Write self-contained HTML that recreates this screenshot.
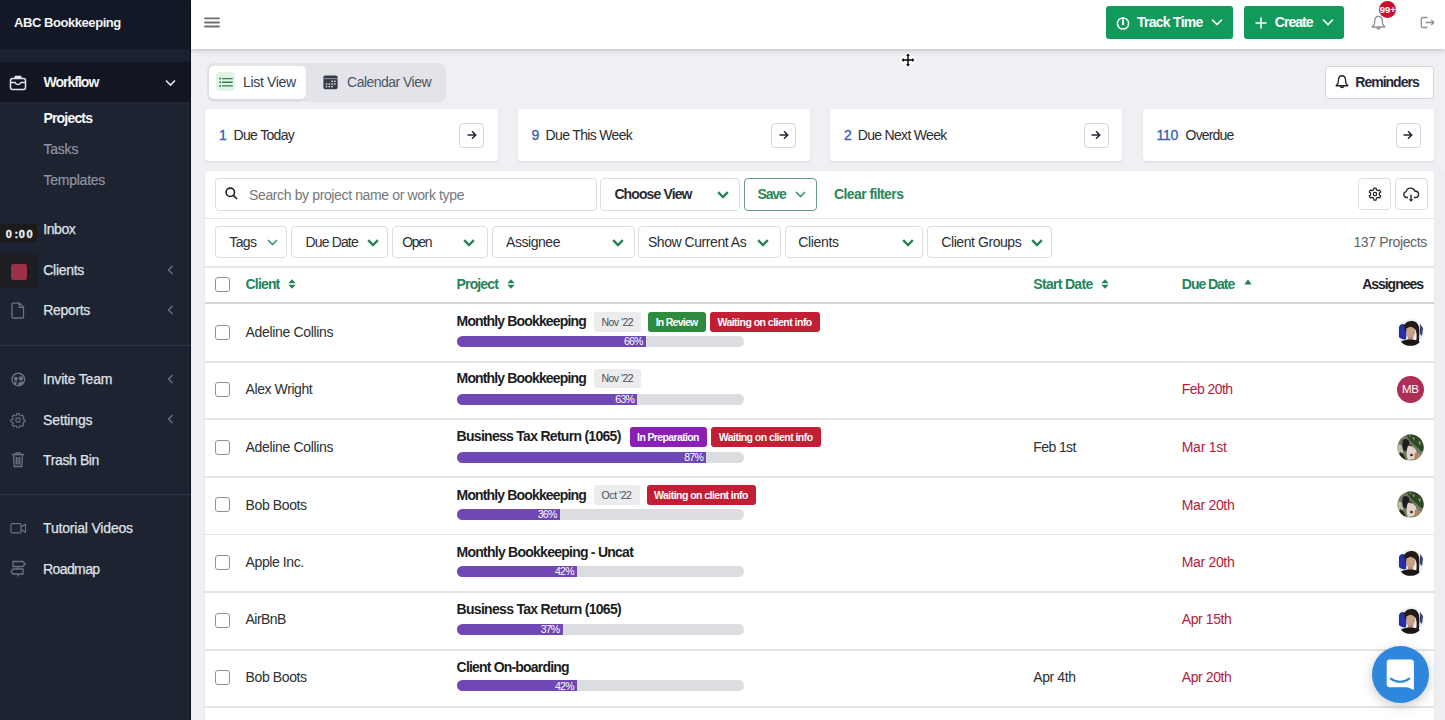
<!DOCTYPE html>
<html><head><meta charset="utf-8"><style>
html,body{margin:0;padding:0;width:1445px;height:720px;overflow:hidden;background:#eef0f4}
body{position:relative;font-family:"Liberation Sans",sans-serif}
.abs{position:absolute}
.t{position:absolute;white-space:nowrap;line-height:1}
svg{display:block}
</style></head><body>
<div class="abs" style="left:0;top:0;width:191px;height:720px;background:#1e2331"></div>
<div class="abs" style="left:0;top:0;width:191px;height:49px;background:#121826"></div>
<div class="abs" style="left:0;top:49px;width:191px;height:13px;background:#1b2130"></div>
<div class="abs" style="left:0;top:62.3px;width:191px;height:40px;background:#121622"></div>
<div class="abs" style="left:190px;top:0;width:1px;height:720px;background:#0b0e15"></div>
<div class="abs" style="left:0;top:345px;width:191px;height:1px;background:#30364a"></div>
<div class="abs" style="left:0;top:494px;width:191px;height:1px;background:#30364a"></div>
<div class="t" style="left:14.00px;top:15.60px;font-size:13px;font-weight:700;color:#f3f4f6;letter-spacing:-0.438px;">ABC Bookkeeping</div>
<div class="t" style="left:43.40px;top:75.35px;font-size:14px;font-weight:700;color:#f3f4f6;letter-spacing:-0.970px;">Workflow</div>
<div class="t" style="left:43.40px;top:110.75px;font-size:14px;font-weight:700;color:#f9fafb;letter-spacing:-0.804px;">Projects</div>
<div class="t" style="left:43.40px;top:141.55px;font-size:14px;font-weight:400;color:#9196a1;letter-spacing:-0.193px;-webkit-text-stroke:0.2px #9196a1;">Tasks</div>
<div class="t" style="left:43.40px;top:172.65px;font-size:14px;font-weight:400;color:#9196a1;letter-spacing:-0.230px;-webkit-text-stroke:0.2px #9196a1;">Templates</div>
<div class="t" style="left:43.30px;top:221.85px;font-size:14px;font-weight:400;color:#dfe2e7;letter-spacing:-0.433px;-webkit-text-stroke:0.25px #dfe2e7;">Inbox</div>
<div class="t" style="left:43.30px;top:262.85px;font-size:14px;font-weight:400;color:#dfe2e7;letter-spacing:-0.295px;-webkit-text-stroke:0.25px #dfe2e7;">Clients</div>
<div class="t" style="left:43.30px;top:303.15px;font-size:14px;font-weight:400;color:#dfe2e7;letter-spacing:-0.333px;-webkit-text-stroke:0.25px #dfe2e7;">Reports</div>
<div class="t" style="left:43.10px;top:372.45px;font-size:14px;font-weight:400;color:#dfe2e7;letter-spacing:-0.203px;-webkit-text-stroke:0.25px #dfe2e7;">Invite Team</div>
<div class="t" style="left:43.10px;top:412.65px;font-size:14px;font-weight:400;color:#dfe2e7;letter-spacing:-0.159px;-webkit-text-stroke:0.25px #dfe2e7;">Settings</div>
<div class="t" style="left:43.10px;top:453.15px;font-size:14px;font-weight:400;color:#dfe2e7;letter-spacing:-0.395px;-webkit-text-stroke:0.25px #dfe2e7;">Trash Bin</div>
<div class="t" style="left:43.10px;top:521.15px;font-size:14px;font-weight:400;color:#dfe2e7;letter-spacing:-0.186px;-webkit-text-stroke:0.25px #dfe2e7;">Tutorial Videos</div>
<div class="t" style="left:43.10px;top:561.75px;font-size:14px;font-weight:400;color:#dfe2e7;letter-spacing:-0.615px;-webkit-text-stroke:0.25px #dfe2e7;">Roadmap</div>
<svg class="abs" style="left:9px;top:75px" width="18" height="16" viewBox="0 0 18 16"><g fill="none" stroke="#e5e7eb" stroke-width="1.5"><rect x="1.5" y="3.5" width="15" height="11" rx="2"/><path d="M1.5 7.5h4.5c.6 1.5 1.5 2 3 2s2.4-.5 3-2h4.5"/></g><rect x="5.5" y="0.8" width="7" height="2.7" rx="1" fill="#e5e7eb"/></svg>
<svg class="abs" style="left:165px;top:79px" width="11" height="8" viewBox="0 0 11 8"><path d="M1 1.5l4.5 4.5 4.5-4.5" fill="none" stroke="#e5e7eb" stroke-width="1.6"/></svg>
<svg class="abs" style="left:167px;top:265px" width="7" height="10" viewBox="0 0 7 10"><path d="M5.5 1L1.5 5l4 4" fill="none" stroke="#6b7280" stroke-width="1.4"/></svg>
<svg class="abs" style="left:167px;top:305px" width="7" height="10" viewBox="0 0 7 10"><path d="M5.5 1L1.5 5l4 4" fill="none" stroke="#6b7280" stroke-width="1.4"/></svg>
<svg class="abs" style="left:167px;top:374px" width="7" height="10" viewBox="0 0 7 10"><path d="M5.5 1L1.5 5l4 4" fill="none" stroke="#6b7280" stroke-width="1.4"/></svg>
<svg class="abs" style="left:167px;top:414px" width="7" height="10" viewBox="0 0 7 10"><path d="M5.5 1L1.5 5l4 4" fill="none" stroke="#6b7280" stroke-width="1.4"/></svg>
<div class="abs" style="left:0;top:224px;width:37px;height:17.5px;background:#1b1b1c"></div>
<div class="t" style="left:5.80px;top:228.99px;font-size:11px;font-weight:700;color:#f5f5f5;letter-spacing:0.000px;-webkit-text-stroke:0.3px #f5f5f5;">0</div>
<div class="t" style="left:14.50px;top:228.99px;font-size:11px;font-weight:700;color:#f5f5f5;letter-spacing:0.000px;-webkit-text-stroke:0.3px #f5f5f5;">:</div>
<div class="t" style="left:18.80px;top:228.99px;font-size:11px;font-weight:700;color:#f5f5f5;letter-spacing:1.590px;-webkit-text-stroke:0.3px #f5f5f5;">00</div>
<div class="abs" style="left:0;top:253px;width:38px;height:35px;background:#1d1e22"></div>
<div class="abs" style="left:11px;top:264px;width:16px;height:16px;background:#9b3148;border-radius:2px"></div>
<svg class="abs" style="left:11px;top:302px" width="14" height="17" viewBox="0 0 14 17"><path d="M2 1.2h6.5l4 4v9.6a1.2 1.2 0 0 1-1.2 1.2H2.2A1.2 1.2 0 0 1 1 14.8V2.4A1.2 1.2 0 0 1 2.2 1.2z M8.3 1.2v4.2h4.2" fill="none" stroke="#6b7280" stroke-width="1.3"/></svg>
<svg class="abs" style="left:10.5px;top:371.5px" width="15" height="15" viewBox="0 0 15 15"><circle cx="7.3" cy="7.5" r="6.3" fill="none" stroke="#6b7280" stroke-width="1.4"/><circle cx="4.8" cy="6.8" r="2" fill="#6b7280"/><circle cx="9.9" cy="6.4" r="2.2" fill="#6b7280"/><path d="M2.5 11.5c.8-1.5 2-2.2 3.5-2.4l-1 3.6z M7 11.8c1-1.6 2.8-2.4 4.6-2.2l.9 1.4c-1 1.6-2.8 2.6-5 2.6z" fill="#6b7280"/></svg>
<svg class="abs" style="left:10px;top:411.5px" width="16" height="16" viewBox="0 0 24 24"><path fill="none" stroke="#6b7280" stroke-width="1.7" d="M10.3 2.5h3.4l.5 2.6 1.9.8 2.2-1.5 2.4 2.4-1.5 2.2.8 1.9 2.6.5v3.4l-2.6.5-.8 1.9 1.5 2.2-2.4 2.4-2.2-1.5-1.9.8-.5 2.6h-3.4l-.5-2.6-1.9-.8-2.2 1.5-2.4-2.4 1.5-2.2-.8-1.9-2.6-.5v-3.4l2.6-.5.8-1.9-1.5-2.2 2.4-2.4 2.2 1.5 1.9-.8z"/><circle cx="12" cy="12" r="3.2" fill="none" stroke="#6b7280" stroke-width="1.7"/></svg>
<svg class="abs" style="left:11px;top:451px" width="14" height="17" viewBox="0 0 14 17"><path d="M1 3.5h12M5 3.5V1.8h4v1.7M2.5 3.5l.8 12h7.4l.8-12M5.3 6v7.5M7 6v7.5M8.7 6v7.5" fill="none" stroke="#6b7280" stroke-width="1.3"/></svg>
<svg class="abs" style="left:9.5px;top:522px" width="16.5" height="12.5" viewBox="0 0 18 13"><rect x="1" y="1.5" width="11" height="10" rx="1.5" fill="none" stroke="#6b7280" stroke-width="1.3"/><path d="M12 5l5-3v9l-5-3" fill="none" stroke="#6b7280" stroke-width="1.3"/></svg>
<svg class="abs" style="left:10px;top:560px" width="16" height="17" viewBox="0 0 16 17"><path d="M3 1.5h10l2 2.5-2 2.5H3z M13 9H3l-2 2.5 2 2.5h10z M8 6.5V9 M8 14v2.5" fill="none" stroke="#6b7280" stroke-width="1.3"/></svg>
<div class="abs" style="left:191px;top:0;width:1254px;height:720px;background:#eef0f4"></div>
<div class="abs" style="left:191px;top:0;width:1254px;height:49px;background:#ffffff;box-shadow:0 1.5px 5px rgba(0,0,0,0.20)"></div>
<svg class="abs" style="left:203px;top:15px" width="18" height="15" viewBox="0 0 18 15"><path d="M2 3.4h14M2 7.5h14M2 11.5h14" stroke="#6f7174" stroke-width="1.8" stroke-linecap="round"/></svg>
<div class="abs" style="left:1106px;top:6px;width:127px;height:33px;background:#129a5d;border-radius:3px"></div>
<svg class="abs" style="left:1116px;top:16px" width="14" height="14" viewBox="0 0 14 14"><circle cx="7" cy="7.5" r="5.6" fill="none" stroke="#fff" stroke-width="1.5"/><path d="M7 1.2v3" stroke="#fff" stroke-width="1.2"/><path d="M6.4 3.5h1.2l.6 4.6a1.2 1.2 0 0 1-2.4 0z" fill="#fff"/></svg>
<div class="t" style="left:1136.90px;top:15.15px;font-size:14px;font-weight:700;color:#ffffff;letter-spacing:-0.719px;">Track Time</div>
<svg class="abs" style="left:1211px;top:18px" width="12" height="8" viewBox="0 0 12 8"><path d="M1 1.5l5 5 5-5" fill="none" stroke="#fff" stroke-width="1.6"/></svg>
<div class="abs" style="left:1244px;top:6px;width:100px;height:33px;background:#129a5d;border-radius:3px"></div>
<svg class="abs" style="left:1255px;top:17px" width="12" height="12" viewBox="0 0 12 12"><path d="M6 0.5v11M0.5 6h11" stroke="#fff" stroke-width="1.6"/></svg>
<div class="t" style="left:1274.80px;top:15.15px;font-size:14px;font-weight:700;color:#ffffff;letter-spacing:-0.982px;">Create</div>
<svg class="abs" style="left:1322px;top:18px" width="12" height="8" viewBox="0 0 12 8"><path d="M1 1.5l5 5 5-5" fill="none" stroke="#fff" stroke-width="1.6"/></svg>
<svg class="abs" style="left:1370.5px;top:15px" width="15" height="16" viewBox="0 0 15 16"><path d="M7.5 1.3c-2.3 0-3.6 1.9-3.8 4.3l-.3 3.5L1.2 12h12.6l-2.2-2.9-.3-3.5c-.2-2.4-1.5-4.3-3.8-4.3z M5.8 12.3a1.7 1.7 0 0 0 3.4 0" fill="none" stroke="#8b9096" stroke-width="1.3" stroke-linejoin="round"/></svg>
<div class="abs" style="left:1378.9px;top:0.9px;width:17px;height:17px;background:#c8102e;border-radius:50%"></div>
<div class="t" style="left:1379.70px;top:4.56px;font-size:9.5px;font-weight:700;color:#ffffff;letter-spacing:0.049px;">99+</div>
<svg class="abs" style="left:1420px;top:16px" width="15" height="13" viewBox="0 0 15 13"><path d="M7.5 1.5H2.6A1.3 1.3 0 0 0 1.3 2.8v7.4a1.3 1.3 0 0 0 1.3 1.3h4.9 M5.5 6.5h8 M11.3 4l2.5 2.5-2.5 2.5" fill="none" stroke="#8b9096" stroke-width="1.3"/></svg>
<svg class="abs" style="left:900px;top:52px" width="16" height="16" viewBox="0 0 16 16"><path d="M8 0.5l3 3H9v3.5h3.5V5l3 3-3 3V9H9v3.5h2l-3 3-3-3h2V9H3.5v2l-3-3 3-3v2H7V3.5H5z" fill="#fff" stroke="#fff" stroke-width="1.5"/><path d="M8 1.5l2 2.2H8.7v3.6h3.6V6L14.5 8l-2.2 2V8.7H8.7v3.6H10L8 14.5l-2-2.2h1.3V8.7H3.7V10L1.5 8l2.2-2v1.3h3.6V3.7H6z" fill="#000"/></svg>
<div class="abs" style="left:207.3px;top:62.6px;width:238.7px;height:39.4px;background:#e2e4e9;border-radius:7px"></div>
<div class="abs" style="left:209.3px;top:66px;width:96.7px;height:32.6px;background:#ffffff;border-radius:5px;box-shadow:0 1px 2px rgba(0,0,0,0.08)"></div>
<div class="abs" style="left:216.3px;top:72.3px;width:19px;height:19px;background:#e2f4e7;border-radius:4px"></div>
<svg class="abs" style="left:219px;top:76.5px" width="14" height="11" viewBox="0 0 14 11"><g fill="#3a7d52"><circle cx="1.1" cy="1.6" r="1"/><circle cx="1.1" cy="5.2" r="1"/><circle cx="1.1" cy="8.9" r="1"/><rect x="3" y="0.9" width="10.8" height="1.4" rx=".5"/><rect x="3" y="4.5" width="10.8" height="1.4" rx=".5"/><rect x="3" y="8.2" width="10.8" height="1.4" rx=".5"/></g></svg>
<div class="t" style="left:243.00px;top:74.75px;font-size:14px;font-weight:400;color:#374151;letter-spacing:-0.324px;">List View</div>
<svg class="abs" style="left:322.5px;top:74.8px" width="15" height="15" viewBox="0 0 15 15"><rect x="0.4" y="0.4" width="14.2" height="13.9" rx="1.8" fill="#343b47"/><rect x="0.4" y="3.3" width="14.2" height="0.8" fill="#a9adb5"/><g fill="#e2e4e9"><rect x="8.3" y="5.6" width="1.6" height="1.4"/><rect x="11" y="5.6" width="1.6" height="1.4"/><rect x="2.7" y="8.3" width="1.6" height="1.4"/><rect x="5.5" y="8.3" width="1.6" height="1.4"/><rect x="8.3" y="8.3" width="1.6" height="1.4"/><rect x="11" y="8.3" width="1.6" height="1.4"/><rect x="2.7" y="10.9" width="1.6" height="1.4"/><rect x="5.5" y="10.9" width="1.6" height="1.4"/><rect x="8.3" y="10.9" width="1.6" height="1.4"/></g></svg>
<div class="t" style="left:347.10px;top:75.15px;font-size:14px;font-weight:400;color:#4b5563;letter-spacing:-0.530px;">Calendar View</div>
<div class="abs" style="left:1325px;top:66px;width:109.4px;height:32.5px;background:#fff;border:1px solid #d1d5db;border-radius:4px;box-sizing:border-box"></div>
<svg class="abs" style="left:1334.5px;top:74px" width="14" height="16" viewBox="0 0 15 16"><path d="M7.5 1.3c-2.3 0-3.6 1.9-3.8 4.3l-.3 3.5L1.2 12h12.6l-2.2-2.9-.3-3.5c-.2-2.4-1.5-4.3-3.8-4.3z M5.8 12.3a1.7 1.7 0 0 0 3.4 0" fill="none" stroke="#1f2328" stroke-width="1.4" stroke-linejoin="round"/></svg>
<div class="t" style="left:1355.30px;top:75.25px;font-size:14px;font-weight:700;color:#1f2937;letter-spacing:-0.998px;">Reminders</div>
<div class="abs" style="left:205px;top:109px;width:292.5px;height:51.5px;background:#fff;border-radius:4px;box-shadow:0 1px 2px rgba(0,0,0,0.10)"></div>
<div class="abs" style="left:459.0px;top:122.5px;width:25px;height:25px;border:1.3px solid #d4d6da;border-radius:4px;box-sizing:border-box;background:#fff"></div>
<svg class="abs" style="left:466.5px;top:130px" width="10" height="10" viewBox="0 0 10 10"><path d="M0.5 5h8.2M5 1.3L8.7 5 5 8.7" fill="none" stroke="#1f2937" stroke-width="1.5"/></svg>
<div class="abs" style="left:517.5px;top:109px;width:292.0px;height:51.5px;background:#fff;border-radius:4px;box-shadow:0 1px 2px rgba(0,0,0,0.10)"></div>
<div class="abs" style="left:771.0px;top:122.5px;width:25px;height:25px;border:1.3px solid #d4d6da;border-radius:4px;box-sizing:border-box;background:#fff"></div>
<svg class="abs" style="left:778.5px;top:130px" width="10" height="10" viewBox="0 0 10 10"><path d="M0.5 5h8.2M5 1.3L8.7 5 5 8.7" fill="none" stroke="#1f2937" stroke-width="1.5"/></svg>
<div class="abs" style="left:830px;top:109px;width:292px;height:51.5px;background:#fff;border-radius:4px;box-shadow:0 1px 2px rgba(0,0,0,0.10)"></div>
<div class="abs" style="left:1083.5px;top:122.5px;width:25px;height:25px;border:1.3px solid #d4d6da;border-radius:4px;box-sizing:border-box;background:#fff"></div>
<svg class="abs" style="left:1091px;top:130px" width="10" height="10" viewBox="0 0 10 10"><path d="M0.5 5h8.2M5 1.3L8.7 5 5 8.7" fill="none" stroke="#1f2937" stroke-width="1.5"/></svg>
<div class="abs" style="left:1143px;top:109px;width:291px;height:51.5px;background:#fff;border-radius:4px;box-shadow:0 1px 2px rgba(0,0,0,0.10)"></div>
<div class="abs" style="left:1395.5px;top:122.5px;width:25px;height:25px;border:1.3px solid #d4d6da;border-radius:4px;box-sizing:border-box;background:#fff"></div>
<svg class="abs" style="left:1403px;top:130px" width="10" height="10" viewBox="0 0 10 10"><path d="M0.5 5h8.2M5 1.3L8.7 5 5 8.7" fill="none" stroke="#1f2937" stroke-width="1.5"/></svg>
<div class="t" style="left:219.00px;top:127.55px;font-size:14px;font-weight:400;color:#3b62ad;letter-spacing:0.000px;-webkit-text-stroke:0.35px #3b62ad;">1</div>
<div class="t" style="left:233.60px;top:127.55px;font-size:14px;font-weight:400;color:#2a2c30;letter-spacing:-0.689px;">Due Today</div>
<div class="t" style="left:531.60px;top:127.55px;font-size:14px;font-weight:400;color:#3b62ad;letter-spacing:0.000px;-webkit-text-stroke:0.35px #3b62ad;">9</div>
<div class="t" style="left:545.60px;top:127.55px;font-size:14px;font-weight:400;color:#2a2c30;letter-spacing:-0.664px;">Due This Week</div>
<div class="t" style="left:844.00px;top:127.55px;font-size:14px;font-weight:400;color:#3b62ad;letter-spacing:0.000px;-webkit-text-stroke:0.35px #3b62ad;">2</div>
<div class="t" style="left:857.80px;top:127.55px;font-size:14px;font-weight:400;color:#2a2c30;letter-spacing:-0.697px;">Due Next Week</div>
<div class="t" style="left:1156.60px;top:127.55px;font-size:14px;font-weight:400;color:#3b62ad;letter-spacing:-0.265px;-webkit-text-stroke:0.35px #3b62ad;">110</div>
<div class="t" style="left:1185.60px;top:127.55px;font-size:14px;font-weight:400;color:#2a2c30;letter-spacing:-0.848px;">Overdue</div>
<div class="abs" style="left:205px;top:171px;width:1229px;height:560px;background:#fff;border-radius:4px;box-shadow:0 1px 2px rgba(0,0,0,0.08)"></div>
<div class="abs" style="left:205px;top:218px;width:1229px;height:1px;background:#e3e5e8"></div>
<div class="abs" style="left:205px;top:266px;width:1229px;height:1.5px;background:#e3e5e8"></div>
<div class="abs" style="left:205px;top:301.5px;width:1229px;height:2px;background:#d5d6d9"></div>
<div class="abs" style="left:215.3px;top:178px;width:381.8px;height:32.69999999999999px;border:1.2px solid #dcdee2;border-radius:4px;box-sizing:border-box;background:#fff;"></div>
<svg class="abs" style="left:225px;top:187px" width="13" height="13" viewBox="0 0 13 13"><circle cx="5.3" cy="5.3" r="4.2" fill="none" stroke="#1f2328" stroke-width="1.6"/><path d="M8.4 8.4l3.6 3.6" stroke="#1f2328" stroke-width="1.7"/></svg>
<div class="t" style="left:249.00px;top:187.75px;font-size:14px;font-weight:400;color:#75777a;letter-spacing:-0.370px;">Search by project name or work type</div>
<div class="abs" style="left:600.4px;top:178px;width:139.20000000000005px;height:32.69999999999999px;border:1.2px solid #dcdee2;border-radius:4px;box-sizing:border-box;background:#fff;"></div>
<div class="t" style="left:614.40px;top:187.15px;font-size:14px;font-weight:700;color:#2a2c30;letter-spacing:-0.884px;">Choose View</div>
<svg class="abs" style="left:717.3px;top:190.5px" width="12" height="8" viewBox="0 0 12 8"><path d="M1.2 1.2l4.8 4.8 4.8-4.8" fill="none" stroke="#268256" stroke-width="2.4"/></svg>
<div class="abs" style="left:743.5px;top:178px;width:73.2px;height:32.7px;border:1.3px solid #6b9b80;border-radius:4px;box-sizing:border-box"></div>
<div class="t" style="left:757.50px;top:187.15px;font-size:14px;font-weight:700;color:#2a8757;letter-spacing:-1.130px;">Save</div>
<svg class="abs" style="left:795px;top:191px" width="11" height="7" viewBox="0 0 11 7"><path d="M1 1l4.5 4.5L10 1" fill="none" stroke="#2a8757" stroke-width="1.4"/></svg>
<div class="t" style="left:834.00px;top:187.15px;font-size:14px;font-weight:700;color:#2a8757;letter-spacing:-0.589px;">Clear filters</div>
<div class="abs" style="left:1358.3px;top:177.8px;width:32.799999999999955px;height:32.69999999999999px;border:1.2px solid #dcdee2;border-radius:4px;box-sizing:border-box;background:#fff;"></div>
<svg class="abs" style="left:1367.8px;top:187.4px" width="14" height="14" viewBox="0 0 14 14"><path d="M11.41 7.91 L12.74 9.05 L11.65 10.95 L9.99 10.36 L8.42 11.27 L8.09 13.00 L5.91 13.00 L5.58 11.27 L4.01 10.36 L2.35 10.95 L1.26 9.05 L2.59 7.91 L2.59 6.09 L1.26 4.95 L2.35 3.05 L4.01 3.64 L5.58 2.73 L5.91 1.00 L8.09 1.00 L8.42 2.73 L9.99 3.64 L11.65 3.05 L12.74 4.95 L11.41 6.09Z" fill="none" stroke="#1f2328" stroke-width="1.25" stroke-linejoin="round"/><circle cx="7" cy="7" r="1.7" fill="none" stroke="#1f2328" stroke-width="1.2"/></svg>
<div class="abs" style="left:1394.5px;top:178px;width:33.09999999999991px;height:32.400000000000006px;border:1.2px solid #dcdee2;border-radius:4px;box-sizing:border-box;background:#fff;"></div>
<svg class="abs" style="left:1402px;top:187px" width="18" height="16" viewBox="0 0 18 16"><path d="M6 10.5H4.3A3 3 0 0 1 4.2 4.6 4.6 4.6 0 0 1 13 4.3a3.1 3.1 0 0 1 .8 6.2H12" fill="none" stroke="#1f2328" stroke-width="1.3" stroke-linejoin="round"/><path d="M9 7.5v6.3" stroke="#1f2328" stroke-width="1.3"/><path d="M6.8 12.2L9 14.8l2.2-2.6z" fill="#1f2328"/></svg>
<div class="abs" style="left:215.3px;top:225.8px;width:72.0px;height:32.599999999999966px;border:1.2px solid #dcdee2;border-radius:4px;box-sizing:border-box;background:#fff;"></div>
<div class="t" style="left:229.30px;top:235.15px;font-size:14px;font-weight:400;color:#2b2f33;letter-spacing:-0.613px;">Tags</div>
<svg class="abs" style="left:266.5px;top:239px" width="11" height="7" viewBox="0 0 11 7"><path d="M1 1l4.5 4.5L10 1" fill="none" stroke="#2a8c5a" stroke-width="1.4"/></svg>
<div class="abs" style="left:291.2px;top:225.8px;width:97.30000000000001px;height:32.599999999999966px;border:1.2px solid #dcdee2;border-radius:4px;box-sizing:border-box;background:#fff;"></div>
<div class="t" style="left:305.50px;top:235.15px;font-size:14px;font-weight:400;color:#2b2f33;letter-spacing:-0.850px;">Due Date</div>
<svg class="abs" style="left:367px;top:238.5px" width="12" height="8" viewBox="0 0 12 8"><path d="M1.2 1.2l4.8 4.8 4.8-4.8" fill="none" stroke="#268256" stroke-width="2.4"/></svg>
<div class="abs" style="left:392.4px;top:225.8px;width:95.20000000000005px;height:32.599999999999966px;border:1.2px solid #dcdee2;border-radius:4px;box-sizing:border-box;background:#fff;"></div>
<div class="t" style="left:402.20px;top:235.15px;font-size:14px;font-weight:400;color:#2b2f33;letter-spacing:-1.277px;">Open</div>
<svg class="abs" style="left:463.3px;top:238.5px" width="12" height="8" viewBox="0 0 12 8"><path d="M1.2 1.2l4.8 4.8 4.8-4.8" fill="none" stroke="#268256" stroke-width="2.4"/></svg>
<div class="abs" style="left:492px;top:225.8px;width:142.60000000000002px;height:32.599999999999966px;border:1.2px solid #dcdee2;border-radius:4px;box-sizing:border-box;background:#fff;"></div>
<div class="t" style="left:506.00px;top:235.15px;font-size:14px;font-weight:400;color:#2b2f33;letter-spacing:-0.444px;">Assignee</div>
<svg class="abs" style="left:612px;top:238.5px" width="12" height="8" viewBox="0 0 12 8"><path d="M1.2 1.2l4.8 4.8 4.8-4.8" fill="none" stroke="#268256" stroke-width="2.4"/></svg>
<div class="abs" style="left:638px;top:225.8px;width:143px;height:32.599999999999966px;border:1.2px solid #dcdee2;border-radius:4px;box-sizing:border-box;background:#fff;"></div>
<div class="t" style="left:647.90px;top:235.15px;font-size:14px;font-weight:400;color:#2b2f33;letter-spacing:-0.441px;">Show Current As</div>
<svg class="abs" style="left:757px;top:238.5px" width="12" height="8" viewBox="0 0 12 8"><path d="M1.2 1.2l4.8 4.8 4.8-4.8" fill="none" stroke="#268256" stroke-width="2.4"/></svg>
<div class="abs" style="left:784.5px;top:225.8px;width:138.89999999999998px;height:32.599999999999966px;border:1.2px solid #dcdee2;border-radius:4px;box-sizing:border-box;background:#fff;"></div>
<div class="t" style="left:798.20px;top:235.15px;font-size:14px;font-weight:400;color:#2b2f33;letter-spacing:-0.328px;">Clients</div>
<svg class="abs" style="left:902px;top:238.5px" width="12" height="8" viewBox="0 0 12 8"><path d="M1.2 1.2l4.8 4.8 4.8-4.8" fill="none" stroke="#268256" stroke-width="2.4"/></svg>
<div class="abs" style="left:927.3px;top:225.8px;width:124.70000000000005px;height:32.599999999999966px;border:1.2px solid #dcdee2;border-radius:4px;box-sizing:border-box;background:#fff;"></div>
<div class="t" style="left:941.30px;top:235.15px;font-size:14px;font-weight:400;color:#2b2f33;letter-spacing:-0.434px;">Client Groups</div>
<svg class="abs" style="left:1030.5px;top:238.5px" width="12" height="8" viewBox="0 0 12 8"><path d="M1.2 1.2l4.8 4.8 4.8-4.8" fill="none" stroke="#268256" stroke-width="2.4"/></svg>
<div class="t" style="left:1353.40px;top:234.65px;font-size:14px;font-weight:400;color:#5f6368;letter-spacing:-0.358px;">137 Projects</div>
<div class="abs" style="left:215px;top:277px;width:15px;height:15px;border:1.3px solid #8f9399;border-radius:3px;box-sizing:border-box;background:#fff"></div>
<div class="t" style="left:245.60px;top:276.85px;font-size:14px;font-weight:700;color:#25845a;letter-spacing:-0.844px;">Client</div>
<svg class="abs" style="left:287.8px;top:279.3px" width="8" height="10" viewBox="0 0 8 10"><path d="M4 0.3L7.7 4.2H0.3z M4 9.7L0.3 5.8h7.4z" fill="#25845a"/></svg>
<div class="t" style="left:456.60px;top:276.65px;font-size:14px;font-weight:700;color:#25845a;letter-spacing:-0.877px;">Project</div>
<svg class="abs" style="left:506.8px;top:279.3px" width="8" height="10" viewBox="0 0 8 10"><path d="M4 0.3L7.7 4.2H0.3z M4 9.7L0.3 5.8h7.4z" fill="#25845a"/></svg>
<div class="t" style="left:1033.30px;top:276.65px;font-size:14px;font-weight:700;color:#25845a;letter-spacing:-0.694px;">Start Date</div>
<svg class="abs" style="left:1101.4px;top:279.3px" width="8" height="10" viewBox="0 0 8 10"><path d="M4 0.3L7.7 4.2H0.3z M4 9.7L0.3 5.8h7.4z" fill="#25845a"/></svg>
<div class="t" style="left:1181.80px;top:276.65px;font-size:14px;font-weight:700;color:#25845a;letter-spacing:-1.027px;">Due Date</div>
<svg class="abs" style="left:1243.5px;top:279px" width="8" height="6" viewBox="0 0 8 6"><path d="M4 0.3L7.7 5.5H0.3z" fill="#25845a"/></svg>
<div class="t" style="left:1362.20px;top:276.65px;font-size:14px;font-weight:700;color:#1f2328;letter-spacing:-1.034px;">Assignees</div>
<div class="abs" style="left:205px;top:361px;width:1229px;height:1.5px;background:#e3e4e6"></div>
<div class="abs" style="left:205px;top:418px;width:1229px;height:1.5px;background:#e3e4e6"></div>
<div class="abs" style="left:205px;top:476px;width:1229px;height:1.5px;background:#e3e4e6"></div>
<div class="abs" style="left:205px;top:533.5px;width:1229px;height:1.5px;background:#e3e4e6"></div>
<div class="abs" style="left:205px;top:591px;width:1229px;height:1.5px;background:#e3e4e6"></div>
<div class="abs" style="left:205px;top:649px;width:1229px;height:1.5px;background:#e3e4e6"></div>
<div class="abs" style="left:205px;top:706px;width:1229px;height:1.5px;background:#e3e4e6"></div>
<div class="abs" style="left:215px;top:324.5px;width:15px;height:15px;border:1.3px solid #8f9399;border-radius:3px;box-sizing:border-box;background:#fff"></div>
<div class="t" style="left:245.60px;top:324.75px;font-size:14px;font-weight:400;color:#2b2f33;letter-spacing:-0.344px;">Adeline Collins</div>
<div class="t" style="left:456.60px;top:314.45px;font-size:14px;font-weight:700;color:#1a1d21;letter-spacing:-0.853px;">Monthly Bookkeeping</div>
<div class="abs" style="left:593.6px;top:311.90000000000003px;width:47.89999999999998px;height:19.9px;background:#ececee;border-radius:3px"></div>
<div class="t" style="left:601.40px;top:316.61px;font-size:10.5px;font-weight:400;color:#4b4f55;letter-spacing:-0.497px;">Nov '22</div>
<div class="abs" style="left:648.2px;top:311.90000000000003px;width:57.5px;height:19.9px;background:#2e8b3e;border-radius:3px"></div>
<div class="t" style="left:655.70px;top:316.61px;font-size:10.5px;font-weight:700;color:#ffffff;letter-spacing:-0.745px;">In Review</div>
<div class="abs" style="left:709.9px;top:311.90000000000003px;width:109.89999999999998px;height:19.9px;background:#c41e35;border-radius:3px"></div>
<div class="t" style="left:717.40px;top:316.61px;font-size:10.5px;font-weight:700;color:#ffffff;letter-spacing:-0.518px;">Waiting on client info</div>
<div class="abs" style="left:456.6px;top:336px;width:287.2px;height:11px;background:#dcdde1;border-radius:6px;overflow:hidden"><div style="width:189.6px;height:11px;background:#7048b6"></div></div>
<div class="t" style="left:623.95px;top:336.11px;font-size:10.5px;font-weight:400;color:#ffffff;letter-spacing:-0.750px;">66%</div>
<svg class="abs" style="left:1396.7px;top:318.5px" width="27" height="27" viewBox="0 0 27 27"><defs><clipPath id="cp0"><circle cx="13.5" cy="13.5" r="13.3"/></clipPath><filter id="bl0"><feGaussianBlur stdDeviation="0.6"/></filter></defs><g clip-path="url(#cp0)"><rect width="27" height="27" fill="#eef0f6"/><g filter="url(#bl0)"><path d="M2 8c1-3 4-4 6-2l2 6-1 8c-2 1-5 0-7-2z" fill="#2133a6"/><path d="M7 7c1-4 5-5 8-5s6 2 7 6c1 4 0 9 0 14l-3 1c1-5 1-10-1-13-3 1-6 0-8-1-1 2-1 4-1 6z" fill="#241a16"/><ellipse cx="13.6" cy="13.3" rx="4.6" ry="5.6" fill="#c99f88"/><path d="M11 18h5v3h-5z" fill="#b88d78"/><path d="M1 27c1-4 5-6.5 12-6.5s11 2 13 6.5z" fill="#1b1614"/><path d="M23 5l3 4-1 8-2-2z" fill="#3a4270"/></g></g></svg>
<div class="abs" style="left:215px;top:382.0px;width:15px;height:15px;border:1.3px solid #8f9399;border-radius:3px;box-sizing:border-box;background:#fff"></div>
<div class="t" style="left:245.60px;top:382.05px;font-size:14px;font-weight:400;color:#2b2f33;letter-spacing:-0.423px;">Alex Wright</div>
<div class="t" style="left:456.60px;top:371.15px;font-size:14px;font-weight:700;color:#1a1d21;letter-spacing:-0.853px;">Monthly Bookkeeping</div>
<div class="abs" style="left:593.6px;top:368.6px;width:47.89999999999998px;height:19.9px;background:#ececee;border-radius:3px"></div>
<div class="t" style="left:601.40px;top:373.31px;font-size:10.5px;font-weight:400;color:#4b4f55;letter-spacing:-0.497px;">Nov '22</div>
<div class="abs" style="left:456.6px;top:394px;width:287.2px;height:11px;background:#dcdde1;border-radius:6px;overflow:hidden"><div style="width:180.9px;height:11px;background:#7048b6"></div></div>
<div class="t" style="left:615.34px;top:394.11px;font-size:10.5px;font-weight:400;color:#ffffff;letter-spacing:-0.750px;">63%</div>
<div class="t" style="left:1181.70px;top:382.05px;font-size:14px;font-weight:400;color:#b3203a;letter-spacing:-0.561px;">Feb 20th</div>
<div class="abs" style="left:1396.7px;top:376.0px;width:27px;height:27px;border-radius:50%;background:#ad2f55"></div>
<div class="t" style="left:1402.00px;top:384.07px;font-size:11.5px;font-weight:400;color:#ffffff;letter-spacing:-0.250px;">MB</div>
<div class="abs" style="left:215px;top:439.5px;width:15px;height:15px;border:1.3px solid #8f9399;border-radius:3px;box-sizing:border-box;background:#fff"></div>
<div class="t" style="left:245.60px;top:439.85px;font-size:14px;font-weight:400;color:#2b2f33;letter-spacing:-0.344px;">Adeline Collins</div>
<div class="t" style="left:456.60px;top:429.35px;font-size:14px;font-weight:700;color:#1a1d21;letter-spacing:-0.714px;">Business Tax Return (1065)</div>
<div class="abs" style="left:629.6px;top:426.8px;width:77.39999999999998px;height:19.9px;background:#8a1eb5;border-radius:3px"></div>
<div class="t" style="left:637.10px;top:431.51px;font-size:10.5px;font-weight:700;color:#ffffff;letter-spacing:-0.632px;">In Preparation</div>
<div class="abs" style="left:711.3px;top:426.8px;width:109.30000000000007px;height:19.9px;background:#c41e35;border-radius:3px"></div>
<div class="t" style="left:718.80px;top:431.51px;font-size:10.5px;font-weight:700;color:#ffffff;letter-spacing:-0.547px;">Waiting on client info</div>
<div class="abs" style="left:456.6px;top:451.7px;width:287.2px;height:11px;background:#dcdde1;border-radius:6px;overflow:hidden"><div style="width:249.9px;height:11px;background:#7048b6"></div></div>
<div class="t" style="left:684.26px;top:451.81px;font-size:10.5px;font-weight:400;color:#ffffff;letter-spacing:-0.750px;">87%</div>
<div class="t" style="left:1033.30px;top:439.85px;font-size:14px;font-weight:400;color:#2b2f33;letter-spacing:-0.598px;">Feb 1st</div>
<div class="t" style="left:1181.70px;top:439.85px;font-size:14px;font-weight:400;color:#b3203a;letter-spacing:-0.232px;">Mar 1st</div>
<svg class="abs" style="left:1396.7px;top:433.5px" width="27" height="27" viewBox="0 0 27 27"><defs><clipPath id="cp2"><circle cx="13.5" cy="13.5" r="13.1"/></clipPath><filter id="bl2"><feGaussianBlur stdDeviation="0.6"/></filter></defs><g clip-path="url(#cp2)"><rect width="27" height="27" fill="#6d7a5e"/><g filter="url(#bl2)"><path d="M9 0h18v18c-3-1-5-3-7-5-4-3-8-7-11-13z" fill="#2e4426"/><path d="M15 3l3 1-1 3z M21 7l3 1-1 4z M12 1l2 1-1 2z" fill="#7d9a66"/><path d="M0 11c2-1 5 0 6 2v6H0z" fill="#b9bea6"/><path d="M6 6c2-2 5-1 6 1l1 6-3 5-4-2c-1-3-1-7 0-10z" fill="#231b1e"/><path d="M11 12c3-1 6 1 8 4l1 4-3 5-6 1c-2-4-2-10 0-14z" fill="#e3d2cc"/><path d="M18 19c3-1 6 1 8 3l-1 5h-8z" fill="#a88862"/><circle cx="14.5" cy="21" r="1.3" fill="#2a1f1c"/><path d="M3 18c3 1 5 4 6 9H1z" fill="#2f231d"/><path d="M13 10l2 1-1 2z" fill="#2a1f1c"/></g></g></svg>
<div class="abs" style="left:215px;top:497.25px;width:15px;height:15px;border:1.3px solid #8f9399;border-radius:3px;box-sizing:border-box;background:#fff"></div>
<div class="t" style="left:245.60px;top:497.55px;font-size:14px;font-weight:400;color:#2b2f33;letter-spacing:-0.389px;">Bob Boots</div>
<div class="t" style="left:456.60px;top:487.65px;font-size:14px;font-weight:700;color:#1a1d21;letter-spacing:-0.853px;">Monthly Bookkeeping</div>
<div class="abs" style="left:593.8px;top:485.1px;width:45.90000000000009px;height:19.9px;background:#ececee;border-radius:3px"></div>
<div class="t" style="left:601.60px;top:489.81px;font-size:10.5px;font-weight:400;color:#4b4f55;letter-spacing:-0.436px;">Oct '22</div>
<div class="abs" style="left:646.6px;top:485.1px;width:109.39999999999998px;height:19.9px;background:#c41e35;border-radius:3px"></div>
<div class="t" style="left:654.10px;top:489.81px;font-size:10.5px;font-weight:700;color:#ffffff;letter-spacing:-0.542px;">Waiting on client info</div>
<div class="abs" style="left:456.6px;top:509.2px;width:287.2px;height:11px;background:#dcdde1;border-radius:6px;overflow:hidden"><div style="width:103.4px;height:11px;background:#7048b6"></div></div>
<div class="t" style="left:537.79px;top:509.31px;font-size:10.5px;font-weight:400;color:#ffffff;letter-spacing:-0.750px;">36%</div>
<div class="t" style="left:1181.70px;top:497.55px;font-size:14px;font-weight:400;color:#b3203a;letter-spacing:-0.319px;">Mar 20th</div>
<svg class="abs" style="left:1396.7px;top:491.25px" width="27" height="27" viewBox="0 0 27 27"><defs><clipPath id="cp3"><circle cx="13.5" cy="13.5" r="13.1"/></clipPath><filter id="bl3"><feGaussianBlur stdDeviation="0.6"/></filter></defs><g clip-path="url(#cp3)"><rect width="27" height="27" fill="#6d7a5e"/><g filter="url(#bl3)"><path d="M9 0h18v18c-3-1-5-3-7-5-4-3-8-7-11-13z" fill="#2e4426"/><path d="M15 3l3 1-1 3z M21 7l3 1-1 4z M12 1l2 1-1 2z" fill="#7d9a66"/><path d="M0 11c2-1 5 0 6 2v6H0z" fill="#b9bea6"/><path d="M6 6c2-2 5-1 6 1l1 6-3 5-4-2c-1-3-1-7 0-10z" fill="#231b1e"/><path d="M11 12c3-1 6 1 8 4l1 4-3 5-6 1c-2-4-2-10 0-14z" fill="#e3d2cc"/><path d="M18 19c3-1 6 1 8 3l-1 5h-8z" fill="#a88862"/><circle cx="14.5" cy="21" r="1.3" fill="#2a1f1c"/><path d="M3 18c3 1 5 4 6 9H1z" fill="#2f231d"/><path d="M13 10l2 1-1 2z" fill="#2a1f1c"/></g></g></svg>
<div class="abs" style="left:215px;top:554.75px;width:15px;height:15px;border:1.3px solid #8f9399;border-radius:3px;box-sizing:border-box;background:#fff"></div>
<div class="t" style="left:245.60px;top:555.35px;font-size:14px;font-weight:400;color:#2b2f33;letter-spacing:-0.414px;">Apple Inc.</div>
<div class="t" style="left:456.60px;top:544.95px;font-size:14px;font-weight:700;color:#1a1d21;letter-spacing:-0.753px;">Monthly Bookkeeping - Uncat</div>
<div class="abs" style="left:456.6px;top:566.2px;width:287.2px;height:11px;background:#dcdde1;border-radius:6px;overflow:hidden"><div style="width:120.6px;height:11px;background:#7048b6"></div></div>
<div class="t" style="left:555.02px;top:566.31px;font-size:10.5px;font-weight:400;color:#ffffff;letter-spacing:-0.750px;">42%</div>
<div class="t" style="left:1181.70px;top:555.35px;font-size:14px;font-weight:400;color:#b3203a;letter-spacing:-0.319px;">Mar 20th</div>
<svg class="abs" style="left:1396.7px;top:548.75px" width="27" height="27" viewBox="0 0 27 27"><defs><clipPath id="cp4"><circle cx="13.5" cy="13.5" r="13.3"/></clipPath><filter id="bl4"><feGaussianBlur stdDeviation="0.6"/></filter></defs><g clip-path="url(#cp4)"><rect width="27" height="27" fill="#eef0f6"/><g filter="url(#bl4)"><path d="M2 8c1-3 4-4 6-2l2 6-1 8c-2 1-5 0-7-2z" fill="#2133a6"/><path d="M7 7c1-4 5-5 8-5s6 2 7 6c1 4 0 9 0 14l-3 1c1-5 1-10-1-13-3 1-6 0-8-1-1 2-1 4-1 6z" fill="#241a16"/><ellipse cx="13.6" cy="13.3" rx="4.6" ry="5.6" fill="#c99f88"/><path d="M11 18h5v3h-5z" fill="#b88d78"/><path d="M1 27c1-4 5-6.5 12-6.5s11 2 13 6.5z" fill="#1b1614"/><path d="M23 5l3 4-1 8-2-2z" fill="#3a4270"/></g></g></svg>
<div class="abs" style="left:215px;top:612.5px;width:15px;height:15px;border:1.3px solid #8f9399;border-radius:3px;box-sizing:border-box;background:#fff"></div>
<div class="t" style="left:245.60px;top:612.05px;font-size:14px;font-weight:400;color:#2b2f33;letter-spacing:-0.562px;">AirBnB</div>
<div class="t" style="left:456.60px;top:602.15px;font-size:14px;font-weight:700;color:#1a1d21;letter-spacing:-0.702px;">Business Tax Return (1065)</div>
<div class="abs" style="left:456.6px;top:623.5px;width:287.2px;height:11px;background:#dcdde1;border-radius:6px;overflow:hidden"><div style="width:106.3px;height:11px;background:#7048b6"></div></div>
<div class="t" style="left:540.66px;top:623.61px;font-size:10.5px;font-weight:400;color:#ffffff;letter-spacing:-0.750px;">37%</div>
<div class="t" style="left:1181.70px;top:612.05px;font-size:14px;font-weight:400;color:#b3203a;letter-spacing:-0.389px;">Apr 15th</div>
<svg class="abs" style="left:1396.7px;top:606.5px" width="27" height="27" viewBox="0 0 27 27"><defs><clipPath id="cp5"><circle cx="13.5" cy="13.5" r="13.3"/></clipPath><filter id="bl5"><feGaussianBlur stdDeviation="0.6"/></filter></defs><g clip-path="url(#cp5)"><rect width="27" height="27" fill="#eef0f6"/><g filter="url(#bl5)"><path d="M2 8c1-3 4-4 6-2l2 6-1 8c-2 1-5 0-7-2z" fill="#2133a6"/><path d="M7 7c1-4 5-5 8-5s6 2 7 6c1 4 0 9 0 14l-3 1c1-5 1-10-1-13-3 1-6 0-8-1-1 2-1 4-1 6z" fill="#241a16"/><ellipse cx="13.6" cy="13.3" rx="4.6" ry="5.6" fill="#c99f88"/><path d="M11 18h5v3h-5z" fill="#b88d78"/><path d="M1 27c1-4 5-6.5 12-6.5s11 2 13 6.5z" fill="#1b1614"/><path d="M23 5l3 4-1 8-2-2z" fill="#3a4270"/></g></g></svg>
<div class="abs" style="left:215px;top:670.0px;width:15px;height:15px;border:1.3px solid #8f9399;border-radius:3px;box-sizing:border-box;background:#fff"></div>
<div class="t" style="left:245.60px;top:669.75px;font-size:14px;font-weight:400;color:#2b2f33;letter-spacing:-0.389px;">Bob Boots</div>
<div class="t" style="left:456.60px;top:659.55px;font-size:14px;font-weight:700;color:#1a1d21;letter-spacing:-0.816px;">Client On-boarding</div>
<div class="abs" style="left:456.6px;top:680.4px;width:287.2px;height:11px;background:#dcdde1;border-radius:6px;overflow:hidden"><div style="width:120.6px;height:11px;background:#7048b6"></div></div>
<div class="t" style="left:555.02px;top:680.51px;font-size:10.5px;font-weight:400;color:#ffffff;letter-spacing:-0.750px;">42%</div>
<div class="t" style="left:1033.30px;top:669.75px;font-size:14px;font-weight:400;color:#2b2f33;letter-spacing:-0.408px;">Apr 4th</div>
<div class="t" style="left:1181.70px;top:669.75px;font-size:14px;font-weight:400;color:#b3203a;letter-spacing:-0.389px;">Apr 20th</div>
<div class="abs" style="left:1371.5px;top:646.3px;width:57px;height:57px;border-radius:50%;background:#2f86dd;box-shadow:0 3px 12px rgba(0,0,0,0.22)"></div>
<svg class="abs" style="left:1385px;top:658px" width="30" height="34" viewBox="0 0 30 34"><path d="M4.7 1.4h21.2a3 3 0 0 1 3 3V32l-6.5-2.8H4.7a3 3 0 0 1-3-3V4.4a3 3 0 0 1 3-3z" fill="#fff"/><path d="M5.8 20.6c5.5 4.2 13 4.2 18.5 0" fill="none" stroke="#2f86dd" stroke-width="2" stroke-linecap="round"/></svg>
<div class="abs" style="left:1434.5px;top:171px;width:10.5px;height:549px;background:#eceef2"></div>
</body></html>
